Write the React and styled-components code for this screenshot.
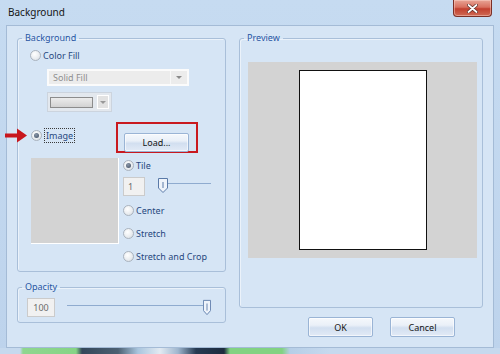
import React from "react";
import styled, { createGlobalStyle } from "styled-components";

const GlobalStyle = createGlobalStyle`
  html, body {
    margin: 0;
    padding: 0;
  }
  body {
    width: 500px;
    height: 354px;
    overflow: hidden;
    font-family: "Noto Sans", "Liberation Sans", sans-serif;
  }
`;

const Window = styled.div`
  width: 500px;
  height: 354px;
  display: flex;
  flex-direction: column;
  background: linear-gradient(#c6dbf1, #bdd3ec);
`;

const TitleBar = styled.div`
  height: 25px;
  flex: none;
  display: flex;
  align-items: flex-start;
  justify-content: space-between;
  padding: 0 8px;
`;

const Title = styled.div`
  margin-top: 6px;
  font-size: 10px;
  line-height: 12px;
  color: #141414;
`;

const CloseButton = styled.div`
  width: 39px;
  height: 17px;
  box-sizing: border-box;
  display: flex;
  align-items: center;
  justify-content: center;
  border: 1px solid #7b2f26;
  border-top: none;
  border-radius: 0 0 4px 4px;
  background: linear-gradient(#e8a596 0%, #d8705f 45%, #c2402f 55%, #cf6a55 100%);
  box-shadow: inset 0 0 0 1px rgba(255, 220, 210, 0.45);
`;

const Client = styled.div`
  flex: none;
  height: 323px;
  margin: 0 6px;
  box-sizing: border-box;
  border: 1px solid #a4bbd6;
  background: #d6e5f5;
  display: grid;
  grid-template-columns: 209px 244px;
  column-gap: 13px;
  align-items: start;
  padding: 6px 0 0 10px;
`;

const BottomFrame = styled.div`
  flex: 1;
  background: linear-gradient(
    to right,
    #c6d9ee 0,
    #c6d9ee 20px,
    #8fd68f 23px,
    #86d486 76px,
    #34475a 82px,
    #4c6072 118px,
    #a9c5de 138px,
    #e2eaf2 160px,
    #9fb6ce 178px,
    #263a52 196px,
    #1d2b3e 224px,
    #82d282 230px,
    #82d282 282px,
    #b6cee7 290px,
    #c6d9ee 330px
  );
`;

const Column = styled.div`
  display: flex;
  flex-direction: column;
  gap: ${(p) => p.$gap || 0}px;
`;

const Group = styled.fieldset`
  margin: 0;
  padding: 0;
  min-width: 0;
  border: 1px solid #a9bfd9;
  border-radius: 3px;
  box-shadow: inset 1px 1px 0 rgba(255, 255, 255, 0.5);
`;

const Legend = styled.legend`
  margin-left: 4px;
  padding: 0 3px;
  font-size: 9px;
  line-height: 12px;
  color: #2755a3;
`;

const GroupBody = styled.div`
  display: flex;
  flex-direction: column;
  align-items: flex-start;
  padding: ${(p) => p.$pad};
`;

const RadioRow = styled.div`
  display: flex;
  align-items: center;
  gap: 2px;
  height: 14px;
  margin-top: ${(p) => p.$mt || 0}px;
  font-size: 9px;
  color: #27487f;
`;

const RadioDot = styled.span`
  width: 11px;
  height: 11px;
  box-sizing: border-box;
  border-radius: 50%;
  border: 1px solid #aab3be;
  background: radial-gradient(circle at 40% 35%, #ffffff 0%, #eaedf0 55%, #d3d8de 100%);
  display: flex;
  align-items: center;
  justify-content: center;
  flex: none;

  &::after {
    content: "";
    width: 5px;
    height: 5px;
    border-radius: 50%;
    background: ${(p) => (p.$checked ? "radial-gradient(circle at 40% 35%, #8a97a8, #3e4d62)" : "transparent")};
  }
`;

const FocusLabel = styled.span`
  border: 1px dotted #3a3a3a;
  padding: 0 1px;
  line-height: 13px;
`;

const Combo = styled.div`
  margin: 7px 0 0 17px;
  width: 142px;
  height: 17px;
  box-sizing: border-box;
  border: 2px solid #fbfbfb;
  background: #ececec;
  display: flex;
  align-items: center;
  font-size: 9px;
  color: #8f8f8f;
  padding-left: 4px;
`;

const ComboText = styled.span`
  flex: 1;
`;

const ComboArrow = styled.span`
  width: 16px;
  height: 100%;
  border-left: 1px solid #f8f8f8;
  display: flex;
  align-items: center;
  justify-content: center;

  &::after {
    content: "";
    border-left: 3px solid transparent;
    border-right: 3px solid transparent;
    border-top: 3px solid #8a8a8a;
  }
`;

const ColorPicker = styled.div`
  margin: 6px 0 0 17px;
  width: 65px;
  height: 20px;
  box-sizing: border-box;
  border: 1px solid #ccd4de;
  background: #e3e8ee;
  display: flex;
  align-items: center;
  gap: 4px;
  padding: 0 2px;
`;

const Swatch = styled.span`
  width: 43px;
  height: 11px;
  box-sizing: border-box;
  border: 1px solid #8c8c8c;
  background: linear-gradient(#ececec, #d2d2d2);
`;

const SwatchDrop = styled.span`
  width: 12px;
  height: 14px;
  box-sizing: border-box;
  border: 1px solid #ffffff;
  background: #e2e2e2;
  display: flex;
  align-items: center;
  justify-content: center;

  &::after {
    content: "";
    border-left: 3px solid transparent;
    border-right: 3px solid transparent;
    border-top: 3px solid #999;
  }
`;

const ImageRow = styled.div`
  position: relative;
  margin-top: 10px;
  height: 31px;
  display: flex;
  align-items: flex-start;
`;

const ImageChoice = styled.div`
  width: 86px;
  padding: 6px 0 0 1px;
  box-sizing: border-box;
`;

const Pointer = styled.svg`
  position: absolute;
  left: -25px;
  top: 6px;
`;

const Highlight = styled.div`
  width: 82px;
  height: 31px;
  box-sizing: border-box;
  border: 2px solid #c9191f;
  padding: 5px 7px 3px 6px;
`;

const Button = styled.button`
  width: 65px;
  height: ${(p) => p.$h || 20}px;
  box-sizing: border-box;
  padding: 0;
  border: 1px solid #9ab4d5;
  border-radius: 2px;
  background: linear-gradient(#f5f8fc 0%, #eaf0f8 40%, #d2dff0 55%, #e2eaf6 100%);
  box-shadow: inset 0 0 0 1px rgba(255, 255, 255, 0.6);
  font-family: "Noto Sans", "Liberation Sans", sans-serif;
  font-size: 9px;
  color: #151515;
`;

const LowerArea = styled.div`
  margin-top: 5px;
  display: flex;
  align-items: flex-start;
  gap: 4px;
`;

const Thumbnail = styled.div`
  margin-left: 1px;
  width: 88px;
  height: 86px;
  box-sizing: border-box;
  background: #d3d3d3;
  border-right: 1px solid #ffffff;
  border-bottom: 1px solid #ffffff;
`;

const Options = styled.div`
  display: flex;
  flex-direction: column;
`;

const SpinRow = styled.div`
  margin-top: ${(p) => p.$mt ?? 5}px;
  display: flex;
  align-items: flex-start;
  gap: ${(p) => p.$gap}px;
`;

const Spin = styled.div`
  width: ${(p) => p.$w}px;
  height: 19px;
  box-sizing: border-box;
  border: 1px solid #cbcbcb;
  background: #f1f1f1;
  font-size: 9px;
  color: #6b6b6b;
  display: flex;
  align-items: center;
  justify-content: ${(p) => (p.$center ? "center" : "flex-start")};
  padding-left: ${(p) => (p.$center ? 0 : 4)}px;
`;

const SliderWrap = styled.div`
  width: ${(p) => p.$w}px;
  display: flex;
  align-items: flex-start;
  margin-top: ${(p) => p.$mt}px;
`;

const Track = styled.span`
  height: 1px;
  margin-top: ${(p) => p.$off}px;
  background: #8fabcf;
  flex: ${(p) => (p.$grow ? 1 : "none")};
  width: ${(p) => p.$w || 0}px;
`;

const Preview = styled.div`
  height: 196px;
  width: 229px;
  background: #d3d3d3;
  display: flex;
  align-items: center;
  justify-content: center;
`;

const Page = styled.div`
  width: 128px;
  height: 180px;
  box-sizing: border-box;
  background: #ffffff;
  border: 1px solid #111111;
`;

const ButtonRow = styled.div`
  margin-top: 9px;
  display: flex;
  justify-content: flex-end;
  gap: 17px;
  padding-right: 28px;
`;

const Radio = ({ checked, children, mt, focus }) => (
  <RadioRow $mt={mt}>
    <RadioDot $checked={checked} />
    {focus ? <FocusLabel>{children}</FocusLabel> : <span>{children}</span>}
  </RadioRow>
);

const Thumb = ({ w, h }) => (
  <svg width={w} height={h} viewBox={`0 0 ${w} ${h}`}>
    <path
      d={`M0.5 0.5 H${w - 0.5} V${h - 5} L${w / 2} ${h - 0.5} L0.5 ${h - 5} Z`}
      fill="#eef3fa"
      stroke="#5a7aa8"
    />
    <line x1={w / 2} y1="4" x2={w / 2} y2={h - 5} stroke="#5a7aa8" />
  </svg>
);

const Slider = ({ width, before, mt, thumbW, thumbH, off }) => (
  <SliderWrap $w={width} $mt={mt}>
    <Track $w={before} $off={off} />
    <Thumb w={thumbW} h={thumbH} />
    <Track $grow $off={off} />
  </SliderWrap>
);

const App = () => (
  <Window>
    <GlobalStyle />
    <TitleBar>
      <Title>Background</Title>
      <CloseButton>
        <svg width="11" height="9" viewBox="0 0 11 9">
          <path d="M1.5 1 L9.5 8 M9.5 1 L1.5 8" stroke="#5a2a24" strokeWidth="3.2" strokeLinecap="round" />
          <path d="M1.5 1 L9.5 8 M9.5 1 L1.5 8" stroke="#ffffff" strokeWidth="1.8" strokeLinecap="round" />
        </svg>
      </CloseButton>
    </TitleBar>
    <Client>
      <Column $gap={9}>
        <Group>
          <Legend>Background</Legend>
          <GroupBody $pad="4px 0 8px 12px">
            <Radio>Color Fill</Radio>
            <Combo>
              <ComboText>Solid Fill</ComboText>
              <ComboArrow />
            </Combo>
            <ColorPicker>
              <Swatch />
              <SwatchDrop />
            </ColorPicker>
            <ImageRow>
              <Pointer width="22" height="15" viewBox="0 0 22 15">
                <path d="M0 5.5 H12 V0.5 L22 7.5 L12 14.5 V9.5 H0 Z" fill="#c8161d" />
              </Pointer>
              <ImageChoice>
                <Radio checked focus>Image</Radio>
              </ImageChoice>
              <Highlight>
                <Button $h={19}>Load...</Button>
              </Highlight>
            </ImageRow>
            <LowerArea>
              <Thumbnail />
              <Options>
                <Radio checked>Tile</Radio>
                <SpinRow $gap={13}>
                  <Spin $w={22}>1</Spin>
                  <Slider width={53} before={0} mt={1} thumbW={10} thumbH={15} off={5} />
                </SpinRow>
                <Radio mt={7}>Center</Radio>
                <Radio mt={9}>Stretch</Radio>
                <Radio mt={9}>Stretch and Crop</Radio>
              </Options>
            </LowerArea>
          </GroupBody>
        </Group>
        <Group>
          <Legend>Opacity</Legend>
          <GroupBody $pad="5px 0 5px 9px">
            <SpinRow $gap={12} $mt={0}>
              <Spin $w={28} $center>100</Spin>
              <Slider width={144} before={136} mt={1} thumbW={9} thumbH={17} off={6} />
            </SpinRow>
          </GroupBody>
        </Group>
      </Column>
      <Column>
        <Group>
          <Legend>Preview</Legend>
          <GroupBody $pad="18px 5px 49px 8px">
            <Preview>
              <Page />
            </Preview>
          </GroupBody>
        </Group>
        <ButtonRow>
          <Button>OK</Button>
          <Button>Cancel</Button>
        </ButtonRow>
      </Column>
    </Client>
    <BottomFrame />
  </Window>
);

export default App;
